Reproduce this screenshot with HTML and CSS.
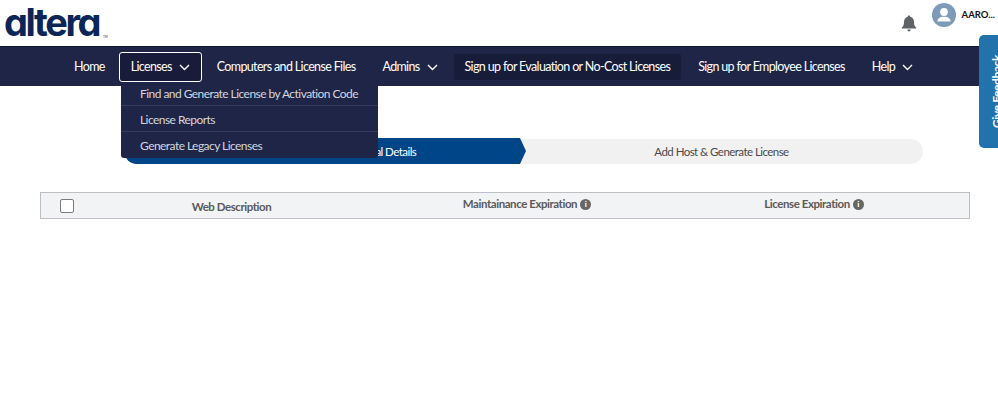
FILE: index.html
```html
<!DOCTYPE html>
<html lang="en">
<head>
<meta charset="utf-8">
<title>Altera</title>
<link rel="stylesheet" href="styles.css">
</head>
<body>
<header class="top">
  <div class="logo"><span class="logo-word">altera</span><span class="tm">TM</span></div>
  <div class="user">
    <svg class="bell" viewBox="0 0 16 17" width="16" height="17"><path fill="#5f6368" d="M8 0.6c.8 0 1.3.5 1.3 1.2 2.6.6 3.7 2.7 3.7 5.2 0 2.6.5 4 2.2 5.6.3.4.1.9-.4.9H1.2c-.5 0-.7-.5-.4-.9C2.500 11 3 9.600 3 7c0-2.500 1.100-4.600 3.700-5.200C6.700 1.100 7.200.6 8 .6z"/><path fill="#5f6368" d="M6.300 14.600h3.400c0 1-.7 1.800-1.700 1.800s-1.700-.8-1.700-1.800z"/></svg>
    <svg class="avatar" viewBox="0 0 24 24" width="24" height="24"><circle cx="12" cy="12" r="12" fill="#7d9ab8"/><circle cx="12" cy="9" r="3.900" fill="#fff"/><path fill="#fff" d="M5.500 18c0-2.900 3-4.300 6.500-4.300s6.500 1.400 6.500 4.300v.6h-13z"/></svg>
    <span class="user-name">AARO...</span>
  </div>
</header>

<nav class="nav">
  <a class="nav-item nav-home">Home</a>
  <a class="nav-item is-open">Licenses<svg class="chev" viewBox="0 0 11 7" width="11" height="7"><path d="M1 1l4.500 4.500L10 1" fill="none" stroke="#fff" stroke-width="1.400"/></svg></a>
  <a class="nav-item">Computers and License Files</a>
  <a class="nav-item">Admins<svg class="chev" viewBox="0 0 11 7" width="11" height="7"><path d="M1 1l4.500 4.500L10 1" fill="none" stroke="#fff" stroke-width="1.400"/></svg></a>
  <a class="nav-item is-hover">Sign up for Evaluation or No-Cost Licenses</a>
  <a class="nav-item">Sign up for Employee Licenses</a>
  <a class="nav-item">Help<svg class="chev" viewBox="0 0 11 7" width="11" height="7"><path d="M1 1l4.500 4.500L10 1" fill="none" stroke="#fff" stroke-width="1.400"/></svg></a>
  <ul class="menu">
    <li>Find and Generate License by Activation Code</li>
    <li>License Reports</li>
    <li>Generate Legacy Licenses</li>
  </ul>
</nav>

<main class="main">
  <div class="stepper">
    <div class="step step-active">Select Licenses and Enter Personal Details</div>
    <div class="step step-next">Add Host &amp; Generate License</div>
  </div>
  <div class="thead">
    <div class="cell cell-check"><span class="checkbox"></span></div>
    <div class="cell cell-desc">Web Description</div>
    <div class="cell">Maintainance Expiration<span class="info">i</span></div>
    <div class="cell">License Expiration<span class="info">i</span></div>
  </div>
</main>

<aside class="feedback"><span class="feedback-text">Give Feedback</span></aside>
</body>
</html>
```
FILE: styles.css
```css
* { box-sizing: border-box; }
html, body { margin: 0; padding: 0; height: 100%; overflow: hidden; }
body { background: #fff; font-family: "Lato", "Liberation Sans", sans-serif; position: relative; }

.top { height: 46px; display: flex; justify-content: space-between; padding: 0 3px 0 4px; }
.logo { display: flex; align-items: flex-end; height: 42px; }
.logo-word {
  font-family: "Inter", sans-serif; font-weight: 700; font-size: 38px; line-height: 42px;
  letter-spacing: -2.400px; color: #0b2556; font-feature-settings: "cv11" 1;
  position: relative; top: 1px;
}
.tm { font-size: 3px; color: #0b2556; margin: 0 0 3px 4px; }
.user { display: flex; align-items: flex-start; padding-top: 3px; }
.bell { margin: 12px 15px 0 0; }
.avatar { margin-right: 6px; }
.user-name { font-size: 9.500px; font-weight: 700; color: #111; line-height: 24px; }

.nav {
  height: 40px; background: #1e2547; display: flex; align-items: center; gap: 3px;
  padding-left: 62px; position: relative; border-top: 1px solid #141a35;
}
.nav-item {
  height: 30px; padding: 2px 11px 0; display: flex; align-items: center; color: #fff;
  font-size: 12.500px; letter-spacing: -0.650px; line-height: 1; white-space: nowrap; border: 1px solid transparent; border-radius: 2px;
}
.nav-home { margin-right: -1px; }
.is-open { background: #181c3a; border-color: #fff; border-radius: 3px; }
.is-hover { background: #171c38; height: 26px; padding: 2px 10px 0; margin: 0 2px 0 1px; }
.chev { margin-left: 7px; margin-top: -1px; }

.menu {
  position: absolute; left: 121px; top: 39px; width: 257px; margin: 0; padding: 0; list-style: none;
  background: #1e2547; color: #d4d6de; font-size: 12px; letter-spacing: -0.550px; border-radius: 0 0 3px 3px; z-index: 3;
}
.menu li { height: 26px; line-height: 28px; padding-left: 19px; border-bottom: 1px solid #353b5c; white-space: nowrap; }
.menu li:first-child { height: 20px; line-height: 16px; }
.menu li:last-child { border-bottom: 0; }

.main { padding: 52px 28px 0 40px; }
.stepper { display: flex; margin: 0 47px 28px 84px; height: 26px; }
.step { display: flex; align-items: center; justify-content: center; font-size: 11.500px; letter-spacing: -0.550px; white-space: nowrap; }
.step-active {
  width: 402px; padding-right: 6px; background: #004588; color: #fff; border-radius: 13px 0 0 13px;
  clip-path: polygon(0 0, calc(100% - 6px) 0, 100% 50%, calc(100% - 6px) 100%, 0 100%);
  position: relative; z-index: 1;
}
.step-next {
  flex: 1; height: 25px; margin: 1px 0 0 -6px; background: #f1f1f1; color: #4a4a4a;
  border-radius: 0 13px 13px 0;
}

.thead {
  display: grid; grid-template-columns: 80px 221px 370px 204px 1fr; height: 27px; width: 930px;
  background: #f2f3f5; border: 1px solid #bdbfc2; color: #5a5a5a; font-size: 11.500px; letter-spacing: -0.440px; font-weight: 700;
}
.cell { display: flex; align-items: center; justify-content: center; padding-bottom: 4px; white-space: nowrap; }
.cell-check { justify-content: flex-start; padding: 0 0 0 19px; }
.cell-desc { padding: 2px 0 0; }
.checkbox { width: 14px; height: 14px; background: #fff; border: 1px solid #7a7a7a; border-radius: 2px; }
.info {
  width: 11px; height: 11px; border-radius: 50%; background: #666; color: #fff; margin: 2px 0 0 3px;
  font-size: 8px; line-height: 11px; text-align: center; font-weight: 900;
}

.feedback {
  position: absolute; left: 979px; top: 35px; width: 30px; height: 113px; background: #2273ab;
  border-radius: 5px; display: flex; align-items: center; justify-content: center; z-index: 4;
}
.feedback-text {
  writing-mode: vertical-rl; transform: rotate(180deg); color: #fff; font-size: 12px; font-weight: 700;
  letter-spacing: -0.400px; white-space: nowrap; position: relative; left: 2px;
}
```
